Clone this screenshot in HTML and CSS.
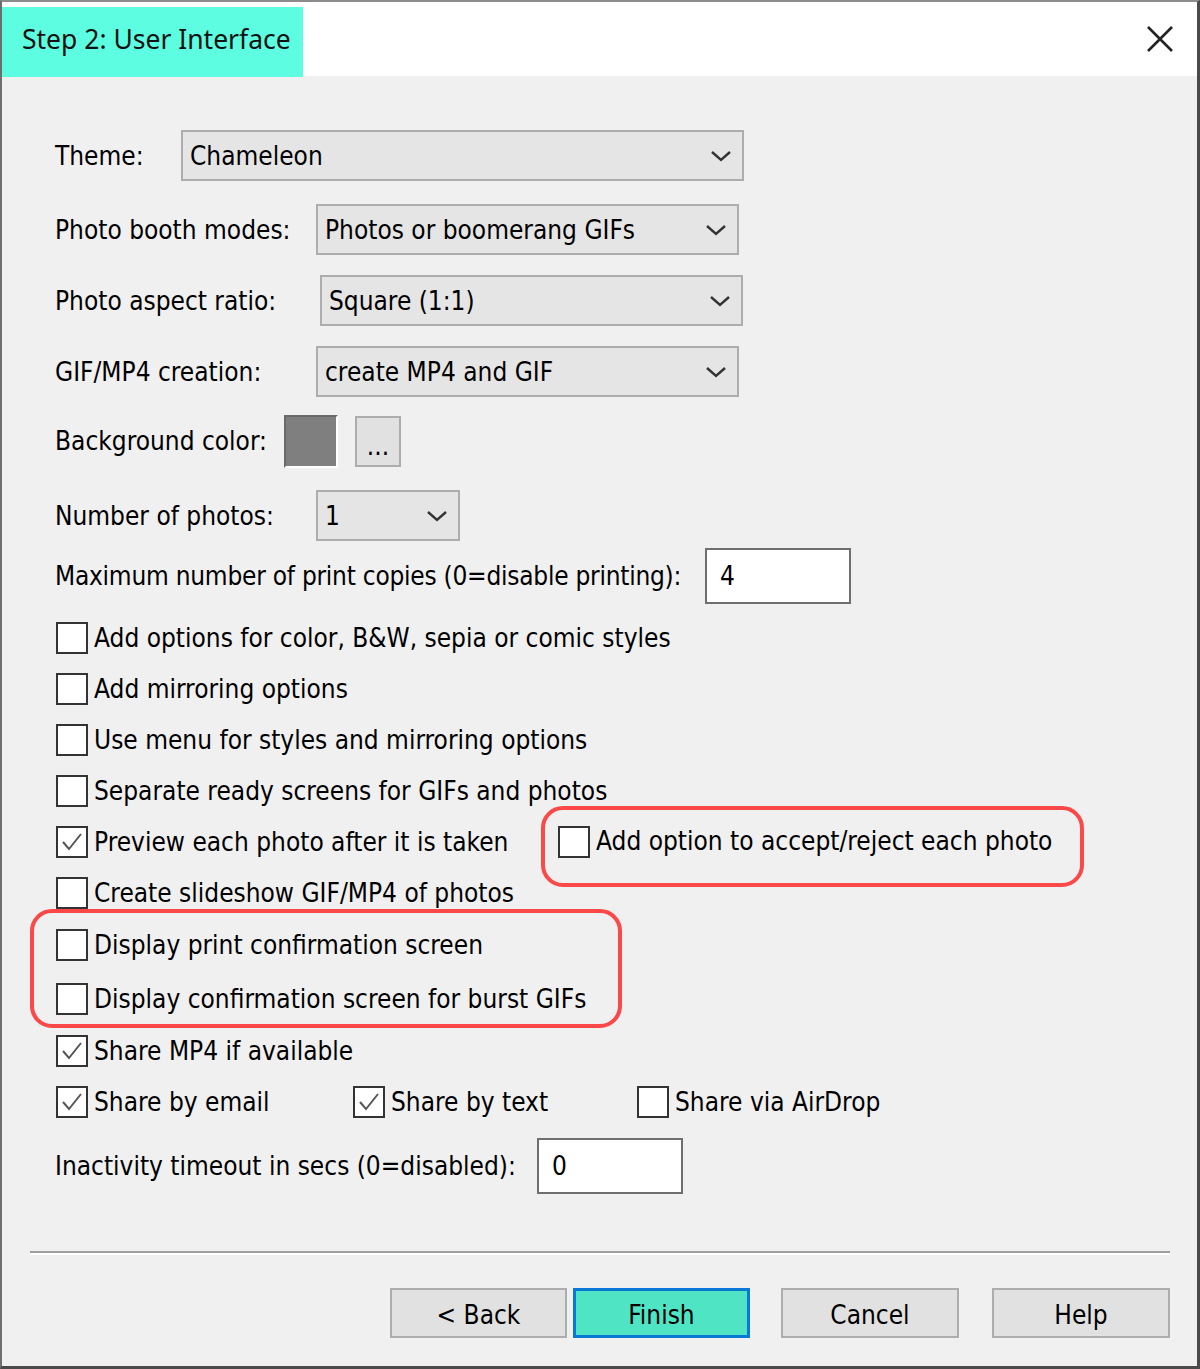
FILE: index.html
```html
<!DOCTYPE html>
<html lang="en">
<head>
    <meta charset="UTF-8">
    <title>Step 2: User Interface</title>
    <link rel="stylesheet" href="styles.css">
</head>
<body>

    <div class="dialog">
        <div class="titlebar">
            <div class="title">Step 2: User Interface</div>
            <div class="close">
                <svg width="28" height="28" viewBox="0 0 28 28">
                    <path d="M2 2 L26 26 M26 2 L2 26" stroke="#222" stroke-width="2.6" fill="none"/>
                </svg>
            </div>
        </div>

        <div class="content">
            <div class="row">
                <span class="label label-theme">Theme:</span>
                <div class="select select-theme">
                    <span>Chameleon</span>
                    <svg class="chevron" width="22" height="12" viewBox="0 0 22 12"><polyline points="2,2 11,10 20,2"/></svg>
                </div>
            </div>
            <div class="row mt-23">
                <span class="label label-wide">Photo booth modes:</span>
                <div class="select select-mid">
                    <span>Photos or boomerang GIFs</span>
                    <svg class="chevron" width="22" height="12" viewBox="0 0 22 12"><polyline points="2,2 11,10 20,2"/></svg>
                </div>
            </div>
            <div class="row mt-20">
                <span class="label label-ratio">Photo aspect ratio:</span>
                <div class="select select-mid">
                    <span>Square (1:1)</span>
                    <svg class="chevron" width="22" height="12" viewBox="0 0 22 12"><polyline points="2,2 11,10 20,2"/></svg>
                </div>
            </div>
            <div class="row mt-20">
                <span class="label label-wide">GIF/MP4 creation:</span>
                <div class="select select-mid">
                    <span>create MP4 and GIF</span>
                    <svg class="chevron" width="22" height="12" viewBox="0 0 22 12"><polyline points="2,2 11,10 20,2"/></svg>
                </div>
            </div>
            <div class="row row-color mt-17">
                <span class="label label-color">Background color:</span>
                <div class="swatch"></div>
                <div class="dots">...</div>
            </div>
            <div class="row mt-22">
                <span class="label label-wide">Number of photos:</span>
                <div class="select select-small">
                    <span>1</span>
                    <svg class="chevron" width="22" height="12" viewBox="0 0 22 12"><polyline points="2,2 11,10 20,2"/></svg>
                </div>
            </div>
            <div class="row row-input mt-7">
                <span class="label label-copies">Maximum number of print copies (0=disable printing):</span>
                <div class="textbox">4</div>
            </div>

            <div class="row mt-8">
                <span class="check"></span><span>Add options for color, B&amp;W, sepia or comic styles</span>
            </div>
            <div class="row">
                <span class="check"></span><span>Add mirroring options</span>
            </div>
            <div class="row">
                <span class="check"></span><span>Use menu for styles and mirroring options</span>
            </div>
            <div class="row">
                <span class="check"></span><span>Separate ready screens for GIFs and photos</span>
            </div>
            <div class="row row-top">
                <div class="col-first">
                    <span class="check checked">
                        <svg width="28" height="28" viewBox="0 0 28 28"><polyline points="5,14 11,21 23,6"/></svg>
                    </span><span>Preview each photo after it is taken</span>
                </div>
                <div class="highlight highlight-side">
                    <span class="check"></span><span>Add option to accept/reject each photo</span>
                </div>
            </div>
            <div class="row">
                <span class="check"></span><span>Create slideshow GIF/MP4 of photos</span>
            </div>
            <div class="highlight highlight-group">
                <div class="row row-tight">
                    <span class="check"></span><span>Display print confirmation screen</span>
                </div>
                <div class="row row-tight mt-4">
                    <span class="check"></span><span>Display confirmation screen for burst GIFs</span>
                </div>
            </div>
            <div class="row mt-n3">
                <span class="check checked">
                    <svg width="28" height="28" viewBox="0 0 28 28"><polyline points="5,14 11,21 23,6"/></svg>
                </span><span>Share MP4 if available</span>
            </div>
            <div class="row share-row">
                <div class="share-item">
                    <span class="check checked">
                        <svg width="28" height="28" viewBox="0 0 28 28"><polyline points="5,14 11,21 23,6"/></svg>
                    </span><span>Share by email</span>
                </div>
                <div class="share-item">
                    <span class="check checked">
                        <svg width="28" height="28" viewBox="0 0 28 28"><polyline points="5,14 11,21 23,6"/></svg>
                    </span><span>Share by text</span>
                </div>
                <div class="share-item">
                    <span class="check"></span><span>Share via AirDrop</span>
                </div>
            </div>
            <div class="row row-input mt-11">
                <span class="label label-timeout">Inactivity timeout in secs (0=disabled):</span>
                <div class="textbox">0</div>
            </div>
        </div>

        <div class="separator"></div>
        <div class="buttons">
            <button class="btn">&lt; Back</button>
            <button class="btn btn-default">Finish</button>
            <button class="btn btn-cancel">Cancel</button>
            <button class="btn btn-help">Help</button>
        </div>
    </div>

</body>
</html>
```

FILE: styles.css
```css
body {
    margin: 0;
    font-family: "DejaVu Sans Condensed", "DejaVu Sans", sans-serif;
    font-size: 26px;
    color: #000;
}
.dialog {
    width: 1200px;
    height: 1369px;
    box-sizing: border-box;
    background-color: #f0f0f0;
    border-top: 2px solid #8c8c8c;
    border-left: 2px solid #6e6e6e;
    border-right: 3px solid #4a4a4a;
    border-bottom: 3px solid #4a4a4a;
    display: flex;
    flex-direction: column;
}
.titlebar {
    height: 74px;
    flex-shrink: 0;
    background-color: #fff;
    display: flex;
    align-items: flex-start;
    padding-top: 5px;
    box-sizing: border-box;
}
.title {
    width: 301px;
    height: 70px;
    box-sizing: border-box;
    padding: 0 0 6px 20px;
    background-color: #5cfde0;
    display: flex;
    align-items: center;
    font-family: "Noto Sans", "Open Sans", sans-serif;
    font-size: 26.5px;
    color: #111;
}
.close {
    margin-left: auto;
    margin-right: 23px;
    margin-top: 18px;
    width: 28px;
    height: 28px;
}
.content {
    padding: 54px 0 0 53px;
}
.row {
    display: flex;
    align-items: center;
    height: 51px;
}
.row-color {
    height: 54px;
}
.row-input {
    height: 56px;
}
.row-tight {
    height: 50px;
}
.row-top {
    align-items: flex-start;
}
.row-top .col-first {
    height: 51px;
}
.mt-4 { margin-top: 4px; }
.mt-7 { margin-top: 7px; }
.mt-8 { margin-top: 8px; }
.mt-11 { margin-top: 11px; }
.mt-17 { margin-top: 17px; }
.mt-20 { margin-top: 20px; }
.mt-22 { margin-top: 22px; }
.mt-23 { margin-top: 23px; }
.mt-n3 { margin-top: -3px; }

.label { flex-shrink: 0; }
.label-theme { width: 126px; }
.label-wide { width: 261px; }
.label-ratio { width: 265px; }
.label-color { width: 229px; }
.label-copies { width: 650px; letter-spacing: -0.25px; }
.label-timeout { width: 482px; }

.select {
    height: 51px;
    box-sizing: border-box;
    border: 2px solid #adadad;
    background-color: #e5e5e5;
    display: flex;
    align-items: center;
    padding: 0 10px 0 7px;
}
.select span {
    flex: 1;
}
.select-theme { width: 563px; }
.select-mid { width: 423px; }
.select-small { width: 144px; }
.chevron {
    fill: none;
    stroke: #333;
    stroke-width: 2.4;
}
.swatch {
    width: 54px;
    height: 53px;
    box-sizing: border-box;
    background-color: #7f7f7f;
    border: 2px solid;
    border-color: #6a6a6a #fff #fff #6a6a6a;
}
.dots {
    width: 46px;
    height: 51px;
    margin-left: 17px;
    box-sizing: border-box;
    border: 2px solid #adadad;
    background-color: #e1e1e1;
    display: flex;
    justify-content: center;
    align-items: flex-end;
    padding-bottom: 6px;
    line-height: 1;
}
.textbox {
    width: 146px;
    height: 56px;
    box-sizing: border-box;
    border: 2px solid #6f6f6f;
    background-color: #fff;
    padding-left: 13px;
    display: flex;
    align-items: center;
}

.check {
    width: 32px;
    height: 32px;
    box-sizing: border-box;
    border: 2px solid #333;
    background-color: #fff;
    margin: 0 6px 0 1px;
    flex-shrink: 0;
    display: flex;
    align-items: center;
    justify-content: center;
}
.check svg polyline {
    fill: none;
    stroke: #555;
    stroke-width: 2;
}
.col-first {
    width: 486px;
    display: flex;
    align-items: center;
}
.highlight {
    border: 4px solid #fb4848;
    border-radius: 22px;
    box-sizing: border-box;
}
.highlight-side {
    width: 543px;
    height: 81px;
    margin-top: -10px;
    padding: 6px 0 0 12px;
    display: flex;
    align-items: flex-start;
}
.highlight-side .check {
    margin-top: 10px;
}
.highlight-side span:last-child {
    line-height: 51px;
}
.highlight-group {
    width: 592px;
    margin: -9px 0 0 -25px;
    padding: 7px 0 0 21px;
}
.share-row {
    display: grid;
    grid-template-columns: 297px 284px auto;
    align-items: center;
}
.share-item {
    display: flex;
    align-items: center;
}

.separator {
    margin: 57px 27px 0 28px;
    height: 2px;
    background-color: #a0a0a0;
    border-bottom: 2px solid #fff;
}
.buttons {
    display: flex;
    justify-content: flex-end;
    margin: 33px 27px 0 0;
}
.btn {
    width: 177px;
    height: 50px;
    box-sizing: border-box;
    border: 2px solid #adadad;
    background-color: #e1e1e1;
    font: inherit;
    color: #000;
    padding: 3px 0 0 0;
}
.btn-default {
    margin-left: 6px;
    background-color: #4ee4c4;
    border: 3px solid #0a78d4;
}
.btn-cancel {
    width: 178px;
    margin-left: 31px;
}
.btn-help {
    width: 178px;
    margin-left: 33px;
}
```
